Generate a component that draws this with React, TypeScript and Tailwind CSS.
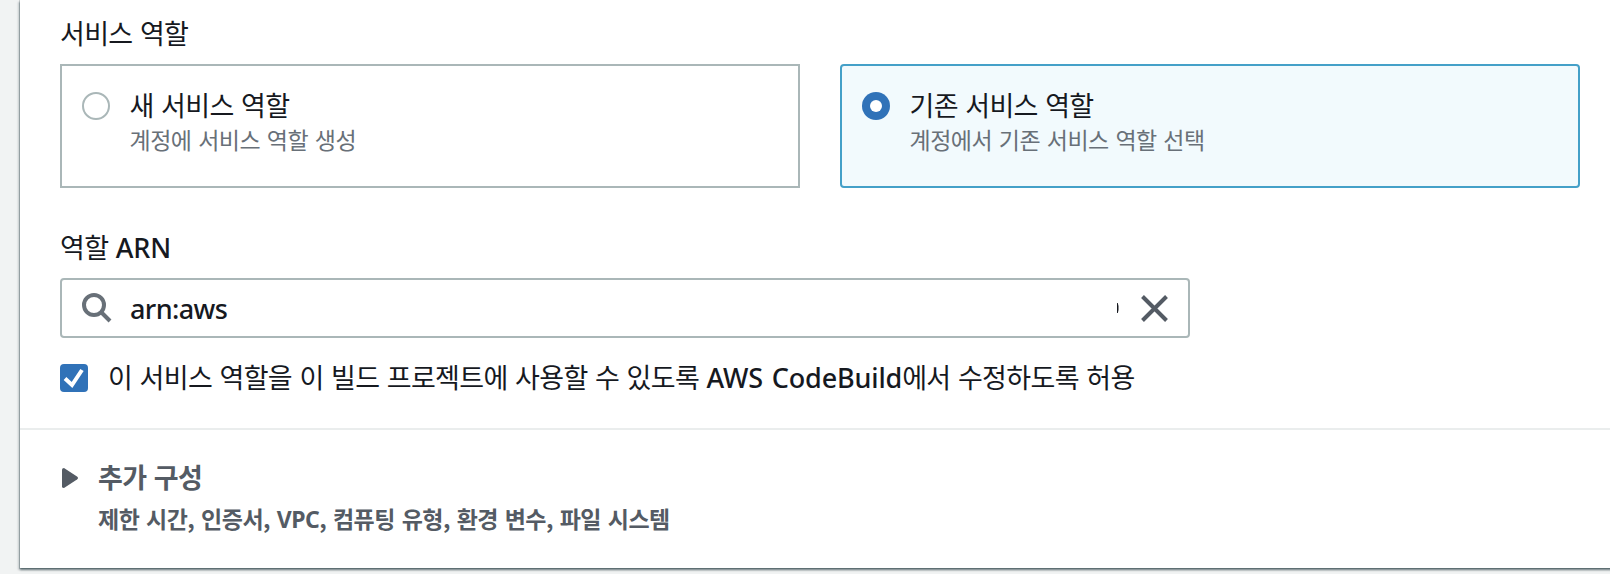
import type { ReactNode } from "react";

function Latin({ children, className = "" }: { children: ReactNode; className?: string }) {
  return <span className={`font-['Noto_Sans','Noto_Sans_CJK_KR',sans-serif] ${className}`}>{children}</span>;
}

function RoleCard({ title, description, selected = false }: { title: string; description: string; selected?: boolean }) {
  return (
    <label
      className={`flex h-[124px] w-[740px] border-2 pt-[21px] pl-5 ${
        selected ? "rounded-[4px] border-[#44a0c8] bg-[#f2fafd]" : "border-[#aab7b8] bg-white"
      }`}
    >
      <span
        className={`mt-[5px] flex size-7 shrink-0 items-center justify-center rounded-full ${
          selected ? "bg-[#3072b8]" : "border-2 border-[#aab7b8] bg-white"
        }`}
      >
        {selected && <span className="size-3 rounded-full bg-white" />}
      </span>
      <span className="ml-[19.5px] flex flex-col">
        <span className="h-9 text-[27px] leading-[36px] tracking-[-0.66px] [word-spacing:2px] text-[#16191f]">{title}</span>
        <span className="h-8 text-[23px] leading-[32px] tracking-[-0.5px] [word-spacing:2px] text-[#687078]">{description}</span>
      </span>
    </label>
  );
}

export default function App() {
  return (
    <div className="h-[574px] w-[1610px] overflow-hidden bg-[#f1f3f3] pl-5 font-['Noto_Sans_CJK_KR',sans-serif] whitespace-nowrap">
      <main className="h-[568px] w-[1640px] bg-white text-[27px] tracking-[-0.66px] [word-spacing:2px] text-[#16191f] shadow-[0_2px_2px_0_rgba(0,28,36,0.5),-2px_2px_2px_0_rgba(0,28,36,0.15),0_0_0_1px_rgba(0,28,36,0.15)]">
        <section className="flex h-[430px] flex-col border-b-2 border-[#eaeded] pl-10">
          <div className="h-16 pt-[11px] leading-[44px]">서비스 역할</div>
          <div className="flex gap-10">
            <RoleCard title="새 서비스 역할" description="계정에 서비스 역할 생성" />
            <RoleCard title="기존 서비스 역할" description="계정에서 기존 서비스 역할 선택" selected />
          </div>
          <div className="mt-[37px] h-[53px] leading-[44px]">
            역할 <Latin className="text-[27px] font-medium tracking-[-0.1px]">ARN</Latin>
          </div>
          <div className="flex h-[60px] w-[1130px] items-center rounded-[4px] border-2 border-[#aab7b8]">
            <svg className="ml-5 size-[30px]" viewBox="0 0 30 30" fill="none" stroke="#687078" strokeWidth="4">
              <circle cx="12" cy="12" r="10" />
              <path d="M19 19l9 9" />
            </svg>
            <Latin className="mt-[2px] ml-[18px] text-[27px] font-medium tracking-[-0.6px]">arn:aws</Latin>
            <svg className="ml-auto h-3 w-[2px]" viewBox="0 0 2 12">
              <path d="M0 1h.8l.7 3v4l-.7 3H0z" fill="#16191f" />
            </svg>
            <svg className="mr-[20px] ml-[22px] size-[27px]" viewBox="0 0 27 27" stroke="#545b64" strokeWidth="4">
              <path d="M1.5 1.5l24 24M25.5 1.5l-24 24" />
            </svg>
          </div>
          <div className="mt-[18px] flex h-[44px] items-center">
            <span className="flex size-7 items-center justify-center rounded-[4px] bg-[#3072b8]">
              <svg className="size-7" viewBox="0 0 28 28" fill="none" stroke="white" strokeWidth="4">
                <path d="M5 14.5l7 6.5L22 6" />
              </svg>
            </span>
            <span className="-mt-[2px] ml-5 leading-[44px]">
              이 서비스 역할을 이 빌드 프로젝트에 사용할 수 있도록 <Latin className="text-[27px] font-medium tracking-[-0.15px]">AWS CodeBuild</Latin>에서 수정하도록 허용
            </span>
          </div>
        </section>
        <section className="flex pt-[25px] pl-[42px] font-bold text-[#545b64]">
          <svg className="mt-[13px] h-5 w-4" viewBox="0 0 16 20" fill="#545b64">
            <path d="M0 1.5Q0 0 2 0L15 8.5Q17 10 15 11.5L2 20Q0 20 0 18.5z" />
          </svg>
          <div className="ml-5 flex flex-col">
            <span className="h-[44px] leading-[44px]">추가 구성</span>
            <span className="mt-px h-9 text-[23px] leading-[36px] tracking-[-0.5px]">
              제한 시간, 인증서, <Latin>VPC</Latin>, 컴퓨팅 유형, 환경 변수, 파일 시스템
            </span>
          </div>
        </section>
      </main>
    </div>
  );
}
